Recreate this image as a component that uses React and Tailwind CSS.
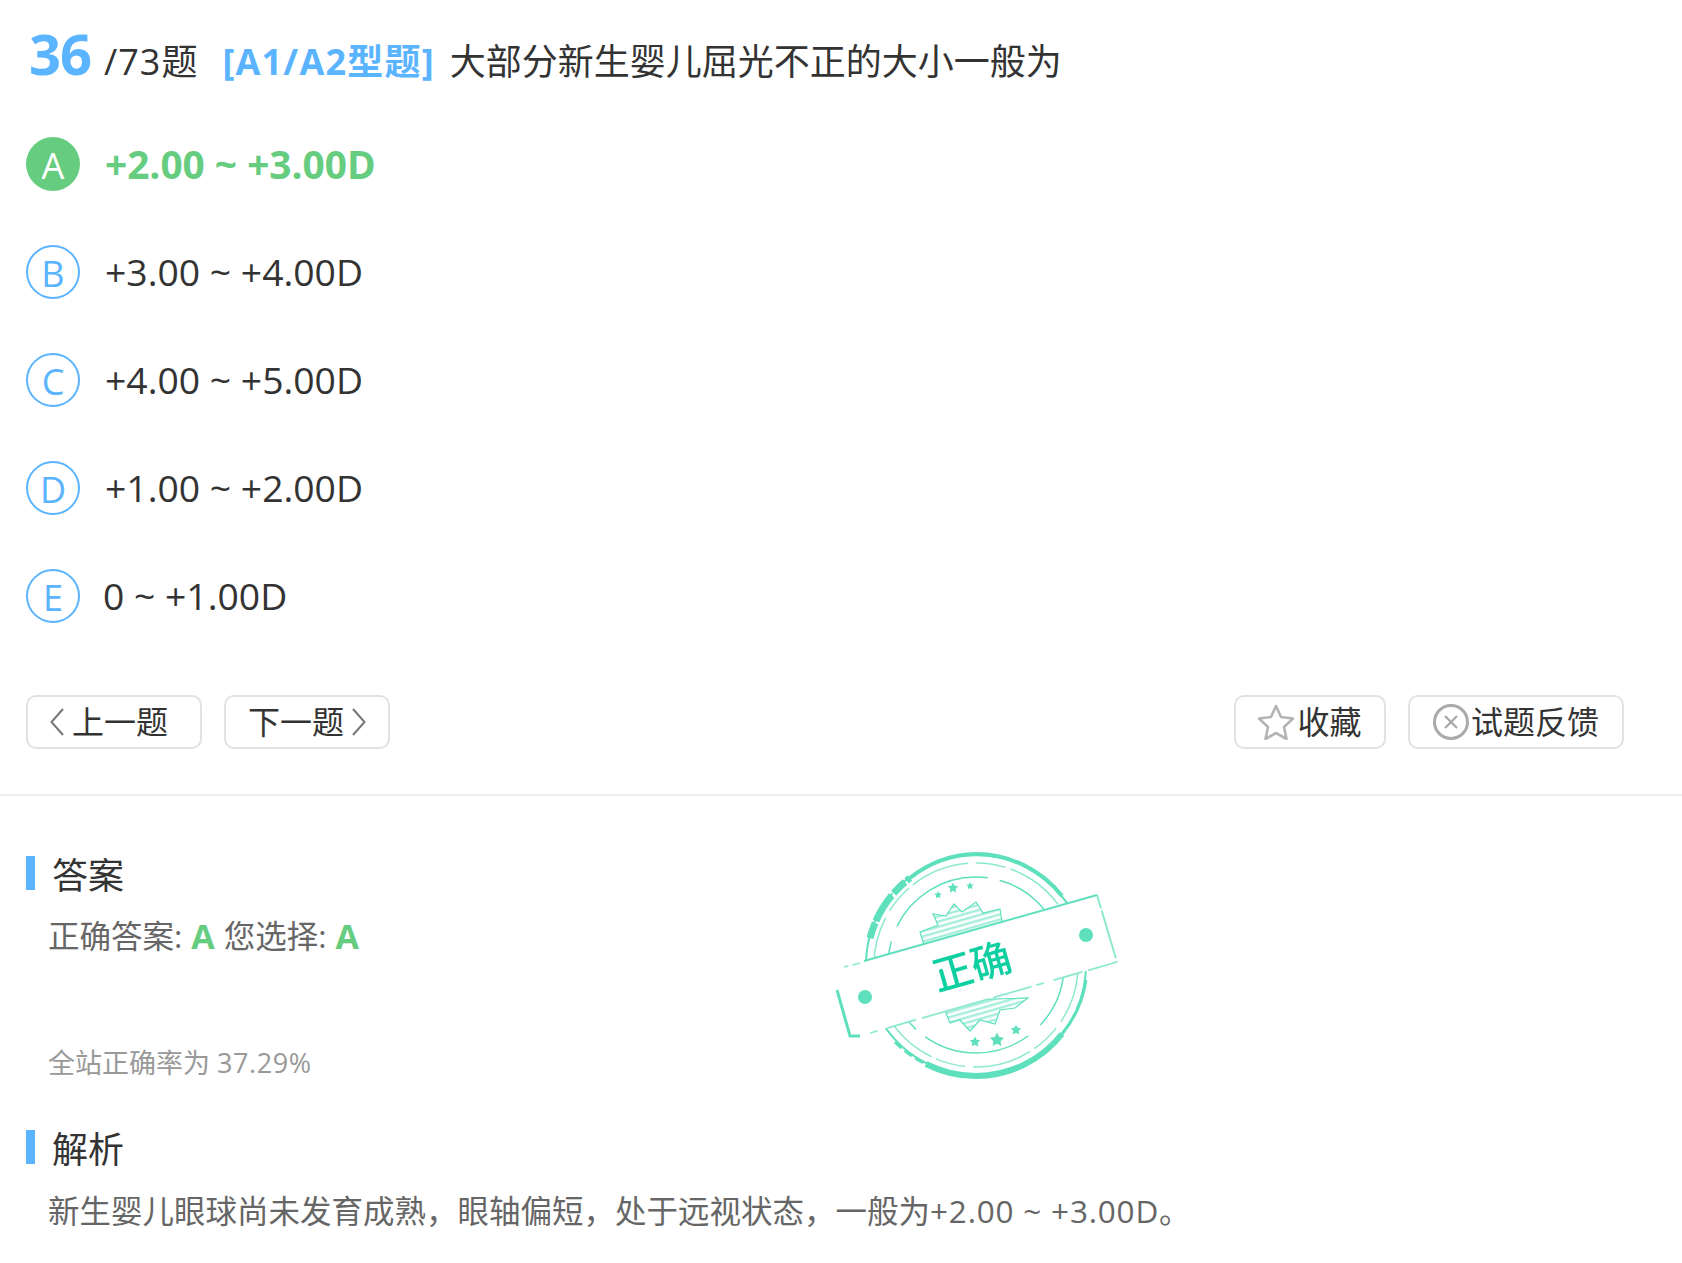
const font = { fontFamily: '"Open Sans", "Noto Sans CJK SC", sans-serif' };

const options = [
  { key: "A", text: "+2.00 ~ +3.00D", right: true },
  { key: "B", text: "+3.00 ~ +4.00D" },
  { key: "C", text: "+4.00 ~ +5.00D" },
  { key: "D", text: "+1.00 ~ +2.00D" },
  { key: "E", text: "0 ~ +1.00D", tight: true },
];

function Option({ item }) {
  return (
    <div className={item.tight ? "flex h-[54px] items-center gap-[23px]" : "flex h-[54px] items-center gap-[25px]"}>
      {item.right ? (
        <span className="flex h-[54px] w-[54px] items-center justify-center rounded-full bg-[#66cc80] pt-[3px] text-[36px] text-white">
          {item.key}
        </span>
      ) : (
        <span className="flex h-[54px] w-[54px] items-center justify-center rounded-full border-2 border-[#5ab4ff] pt-[3px] text-[36px] text-[#5ab4ff]">
          {item.key}
        </span>
      )}
      <span className={item.right ? "text-[38.8px] font-bold text-[#66cc80]" : "text-[37.3px] text-[#333]"}>
        {item.text}
      </span>
    </div>
  );
}

function SectionTitle({ children }) {
  return (
    <div className="flex h-[34px] items-center border-l-[9px] border-[#5ab4ff] pl-[17px] pt-[5px] text-[36px] text-[#333]">
      {children}
    </div>
  );
}

function Chevron({ dir }) {
  return (
    <svg width="14" height="28" viewBox="0 0 14 28" fill="none" stroke="#777" strokeWidth="2">
      <path d={dir === "left" ? "M13 1 L1.5 14 L13 27" : "M1 1 L12.5 14 L1 27"} />
    </svg>
  );
}

function StarIcon() {
  return (
    <svg width="36" height="36" viewBox="0 0 36 36" fill="none" stroke="#b4b4b4" strokeWidth="2.6" strokeLinejoin="round">
      <path d="M18 2 L23 13 L35 14.5 L26 23 L28.5 35 L18 29 L7.5 35 L10 23 L1 14.5 L13 13 Z" />
    </svg>
  );
}

function CloseIcon() {
  return (
    <svg width="36" height="36" viewBox="0 0 36 36" fill="none" stroke="#aaa">
      <circle cx="18" cy="18" r="16.5" strokeWidth="3" />
      <path d="M12 12 L24 24 M24 12 L12 24" strokeWidth="2.4" />
    </svg>
  );
}

function Star({ x, y, r }) {
  const pts = [];
  for (let i = 0; i < 10; i++) {
    const a = (Math.PI / 5) * i - Math.PI / 2;
    const d = i % 2 === 0 ? r : r * 0.5;
    pts.push(`${x + d * Math.cos(a)},${y + d * Math.sin(a)}`);
  }
  return <polygon points={pts.join(" ")} fill="#5fe0bd" />;
}

function Stamp() {
  const c = "#5fe0bd";
  return (
    <svg width="340" height="260" viewBox="0 0 340 260" className="absolute left-[800px] top-[830px] blur-[0.4px]">
      <defs>
        <pattern id="hatch" width="8" height="5" patternUnits="userSpaceOnUse" patternTransform="rotate(-16)">
          <rect width="8" height="2.4" fill="#a5eed9" />
        </pattern>
      </defs>
      {/* rough outer ring */}
      <circle cx="176" cy="135" r="110" fill="none" stroke={c} strokeWidth="2" strokeDasharray="46 3 80 2 34 5 120 4" />
      <path d="M70 108 A110 110 0 0 1 110 48" fill="none" stroke={c} strokeWidth="7" strokeDasharray="16 2 30 3" />
      <path d="M110 48 A110 110 0 0 1 176 24 A110 110 0 0 1 262 66" fill="none" stroke={c} strokeWidth="4" />
      <path d="M126 234 A110 110 0 0 0 176 246 A110 110 0 0 0 262 204" fill="none" stroke={c} strokeWidth="6" />
      <path d="M262 204 A110 110 0 0 0 286 150" fill="none" stroke={c} strokeWidth="3" />
      <path d="M95 212 A110 110 0 0 0 126 234" fill="none" stroke={c} strokeWidth="3" strokeDasharray="9 4" />
      {/* thin rings */}
      <circle cx="176" cy="135" r="102" fill="none" stroke="#8ce9cf" strokeWidth="1.5" strokeDasharray="60 8 30 5" />
      <circle cx="176" cy="135" r="88" fill="none" stroke={c} strokeWidth="1.5" strokeDasharray="96 16 110 12" strokeDashoffset="30" />
      {/* stars */}
      <Star x={138} y={65} r={4} />
      <Star x={153} y={58} r={5.5} />
      <Star x={170} y={56} r={4} />
      <Star x={175} y={212} r={5.5} />
      <Star x={197} y={210} r={7.5} />
      <Star x={216} y={200} r={5.5} />
      {/* burst */}
      <path
        d="M120 102 L138 95 L133 84 L146 86 L154 74 L162 82 L176 72 L183 83 L200 79 L202 92 L215 100 L125 118 Z"
        fill="url(#hatch)"
        stroke={c}
        strokeWidth="1.2"
      />
      <path
        d="M144 178 L150 193 L160 190 L170 201 L180 190 L195 194 L200 180 L215 178 L228 168 L160 170 Z"
        fill="url(#hatch)"
        stroke={c}
        strokeWidth="1.2"
      />
      {/* banner */}
      <path d="M297 65 L317 132 L55 207 L36 140 Z" fill="#fff" />
      <path d="M297 65 L317 132" fill="none" stroke="#8ce9cf" strokeWidth="2" strokeDasharray="14 2 50 3" />
      <path d="M297 65 L64 131" fill="none" stroke={c} strokeWidth="2" />
      <path d="M60 133 L44 137" fill="none" stroke="#8ce9cf" strokeWidth="1.5" strokeDasharray="8 4" />
      <path d="M37 160 L50 206 L60 206" fill="none" stroke={c} strokeWidth="3" />
      <path d="M70 203 L317 132" fill="none" stroke="#8ce9cf" strokeWidth="1.8" strokeDasharray="8 10 30 6 70 4 40 5" />
      <circle cx="65" cy="167" r="7" fill={c} />
      <circle cx="286" cy="105" r="7" fill={c} />
      <text
        x="172"
        y="151"
        textAnchor="middle"
        transform="rotate(-16 172 137)"
        fill="#10cfa0"
        fontSize="40"
        fontWeight="500"
        fontFamily='"Noto Sans CJK SC", sans-serif'
      >
        正确
      </text>
    </svg>
  );
}

export default function App() {
  return (
    <div className="relative h-[1263px] bg-white" style={font}>
      <div className="px-[26px] pt-[22px]">
        <h1 className="flex h-[60px] items-baseline pl-[3px] font-normal text-[#333]">
          <span className="text-[56px] leading-[62px] font-bold tracking-[-1px] text-[#5ab4ff]">36</span>
          <span className="ml-[13px] text-[36px] leading-[66px] tracking-[1px]">/73题</span>
          <span className="ml-[24px] text-[36px] leading-[66px] font-bold tracking-[1.2px] text-[#5ab4ff]">[A1/A2型题]</span>
          <span className="ml-[15px] text-[36px] leading-[66px]">大部分新生婴儿屈光不正的大小一般为</span>
        </h1>

        <div className="mt-[55px] flex flex-col gap-[54px]">
          {options.map((item) => (
            <Option key={item.key} item={item} />
          ))}
        </div>

        <div className="mt-[72px] flex h-[54px] items-stretch gap-[22px] pr-[32px] pt-[0px] text-[32px] text-[#333]">
          <button className="flex w-[176px] items-center gap-[8px] rounded-[10px] border-2 border-[#e2e2e2] pl-[22px]">
            <Chevron dir="left" />
            上一题
          </button>
          <button className="flex w-[166px] items-center justify-center gap-[8px] rounded-[10px] border-2 border-[#e2e2e2]">
            下一题
            <Chevron dir="right" />
          </button>
          <button className="ml-auto flex w-[152px] items-center justify-center gap-[3px] rounded-[10px] border-2 border-[#e2e2e2]">
            <StarIcon />
            收藏
          </button>
          <button className="flex w-[216px] items-center justify-center gap-[2px] rounded-[10px] border-2 border-[#e2e2e2]">
            <CloseIcon />
            试题反馈
          </button>
        </div>
      </div>

      <div className="mt-[45px] h-[2px] bg-[#eeeeee]" />

      <div className="px-[26px] pt-[60px]">
        <SectionTitle>答案</SectionTitle>
        <p className="mt-[24px] flex h-[44px] items-center gap-[9px] pl-[22px] text-[31.5px] text-[#666]">
          <span>正确答案:</span>
          <b className="text-[34px] text-[#66cc80]">A</b>
          <span>您选择:</span>
          <b className="text-[34px] text-[#66cc80]">A</b>
        </p>
        <p className="mt-[85px] pl-[22px] text-[27px] leading-[40px] text-[#999]">
          全站正确率为 <span className="tracking-[0.6px]">37.29%</span>
        </p>
        <div className="mt-[47px]">
          <SectionTitle>解析</SectionTitle>
        </div>
        <p className="mt-[25px] pl-[22px] text-[31.5px] leading-[44px] text-[#666]">
          新生婴儿眼球尚未发育成熟，眼轴偏短，处于远视状态，一般为<span className="tracking-[0.8px]">+2.00 ~ +3.00D</span>。
        </p>
      </div>

      <Stamp />
    </div>
  );
}
